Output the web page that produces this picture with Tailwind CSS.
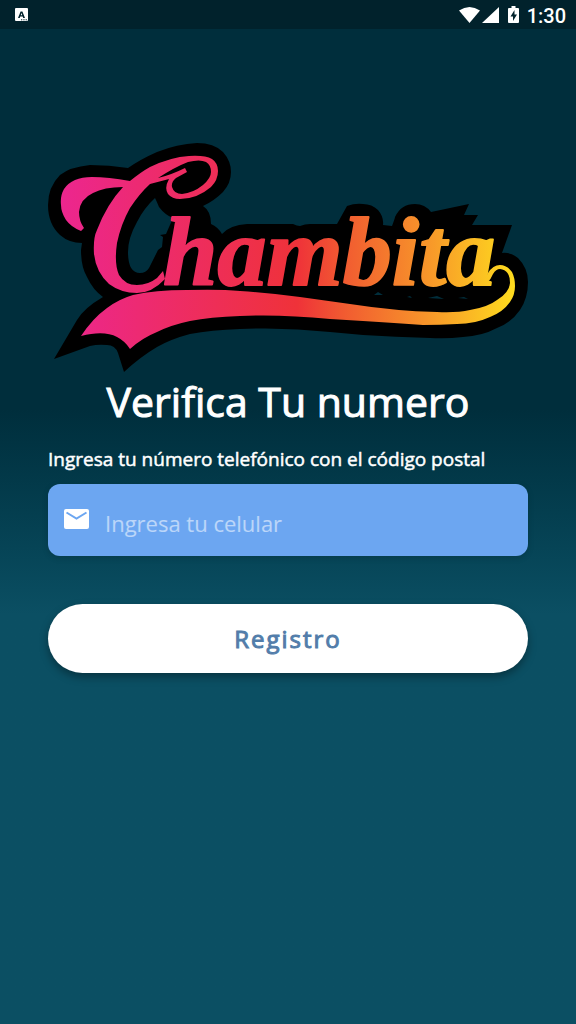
<!DOCTYPE html>
<html lang="es">
<head>
<meta charset="utf-8">
<meta name="viewport" content="width=device-width, initial-scale=1">
<title>Chambita</title>
<script src="https://cdn.jsdelivr.net/npm/@tailwindcss/browser@4"></script>
</head>
<body class="min-h-screen flex flex-col bg-linear-to-b from-[#002e3c] from-40% to-[#0b4f63] to-60% font-['Open_Sans',sans-serif] text-white">
<header class="h-[29px] shrink-0 flex items-center justify-between bg-[#01222c] pl-[15px] pr-[10px]">
  <svg class="size-[13px]" viewBox="0 0 13 13" aria-hidden="true">
    <rect width="13" height="13" rx="1" fill="#fff"/>
    <path d="M3 10 5.600 3.500h1.800L10 10H8.200l-.5-1.400H5.200L4.700 10zM5.700 7.300h1.600L6.500 5z" fill="#01222c"/>
    <path d="M6 11.800h1.300m1 0h1.300m1 0h1.300" stroke="#01222c" stroke-width="1"/>
  </svg>
  <div class="flex items-center">
    <svg class="w-[21px] h-4" viewBox="0 0 21 16" fill="#fff" aria-hidden="true"><path d="M0 3.500Q10.500-3.500 21 3.500L10.500 16z"/></svg>
    <svg class="w-[17px] h-4 ml-[2px]" viewBox="0 0 17 16" fill="#fff" aria-hidden="true"><path d="M17 0v16H0z"/></svg>
    <svg class="w-[11px] h-[17px] ml-[9px]" viewBox="0 0 11 17" aria-hidden="true"><path d="M3.500 0h4v2H10q1 0 1 1v13q0 1-1 1H1q-1 0-1-1V3q0-1 1-1h2.500z" fill="#fff"/><path d="M6.500 4 2.500 10.500H5V15l4-6.500H6.500z" fill="#01222c"/></svg>
    <time class="ml-2 font-[Roboto] text-[20px] leading-7 font-medium pt-[2px]">1:30</time>
  </div>
</header>
<main class="px-12 pt-[113px]">
  <svg class="block w-full" viewBox="48 142 480 230" role="img" aria-label="Chambita">
    <defs>
      <linearGradient id="ink" gradientUnits="userSpaceOnUse" x1="60" y1="0" x2="516" y2="0">
        <stop offset="0" stop-color="#ec268f"/>
        <stop offset=".52" stop-color="#ef3239"/>
        <stop offset=".62" stop-color="#f15a31"/>
        <stop offset=".8" stop-color="#f7942a"/>
        <stop offset="1" stop-color="#fedd1e"/>
      </linearGradient>
    </defs>
    <!-- badge backing -->
    <path fill-rule="evenodd" d="M82 243Q69 243 60 235Q48 224 48 205Q48 187 60 175Q70 167 90 165Q109 165 128 168Q141 159 157 152Q177 144 197 143Q214 143 223 152Q231 161 231 172Q231 183 223 192Q214 201 203 206Q211 211 211 224Q218 227 222 234Q230 225 247 224H293Q297 226 300 226Q305 224 310 224H337L347 206Q355 203 363 204Q372 204 378 210Q384 217 383 225L392 226Q395 218 395 217Q401 204 415 204Q425 204 431 212L469 204 464 215H478L472 225H512L502 253Q511 252 518 258Q528 268 528 282Q528 298 520 310Q511 323 497 328Q482 336 463 337Q447 339 430 338Q395 337 363 335L330 332Q285 327 240 329Q211 330 190 334Q171 339 157 347Q140 357 124 372L118 353Q115 345 107 345Q98 344 90 346L54 359 77 320Q84 308 103 297Q93 290 87 277Q81 267 81 250ZM155 198Q144 208 137 222Q128 238 128 252Q128 273 140 273Q146 273 149 268L158 250 162 247 163 237 160 235 166 234 173 218Q165 215 159 207Q157 202 155 198ZM374 295 378 292 383 295ZM407 297 410 296 412 298ZM428 298 437 296 444 299ZM458 298 464 297 468 299Z"/>
    <!-- initial with flourish -->
    <path fill="url(#ink)" fill-rule="evenodd" d="M84 228 81 231Q71 227 66 220Q61 212 61 205Q60 196 64 189Q72 177 92 177Q108 177 130 181Q141 172 150 167Q171 157 189 156Q205 155 212 159Q218 163 218 171Q218 180 211 187Q197 199 180 199Q172 199 168 194Q164 188 169 179L150 184Q140 193 130 208Q121 224 117 243Q114 264 119 275Q125 285 137 285Q148 285 157 278L163 271 165 279Q152 293 137 293Q121 293 109 284Q96 272 94 254Q93 238 97 230Q107 204 123 187Q104 187 93 193Q80 199 79 212Q79 221 84 228ZM158 178Q175 167 188 162Q200 159 206 162Q211 165 211 172Q211 178 203 185Q193 193 182 194Q174 194 172 187Q171 182 176 178L187 172 185 168Q171 175 158 178Z"/>
    <text x="163" y="285" fill="url(#ink)" stroke="url(#ink)" stroke-width="2" stroke-linejoin="round" font-family="Liberation Serif, serif" font-weight="700" font-style="italic" font-size="98">hambita</text>
    <!-- underline ribbon -->
    <path fill="url(#ink)" d="M81 336Q93 318 107 308Q119 299 133 295Q155 290 187 290Q220 289 240 291Q270 293 300 297L350 304Q395 311 437 312Q457 313 470 310Q488 307 497 300Q509 293 510 283Q510 270 500 269Q496 269 493 274Q489 284 480 286L478 282Q485 280 488 273Q493 265 500 265Q507 265 512 272Q515 278 515 286Q515 295 510 302Q503 312 490 317Q475 324 457 324Q440 325 423 325Q395 323 363 321L330 319Q280 314 240 316Q210 317 190 321Q171 325 157 332Q142 338 130 349Q125 341 117 337Q104 330 81 336Z"/>
  </svg>
  <h1 class="mt-1 text-center text-[41px] leading-[50px] [-webkit-text-stroke:1px_white]">Verifica Tu numero</h1>
  <form>
    <label for="phone" class="block mt-5 text-[19px] leading-[26px] [-webkit-text-stroke:0.5px_white]">Ingresa tu número telefónico con el código postal</label>
    <div class="relative mt-3 h-[72px] flex items-center rounded-xl bg-[#6ca6f1] shadow-[0_2px_6px_rgba(0,0,0,0.15)]">
      <svg class="absolute left-4 top-[25px] w-[25px] h-5" viewBox="0 0 25 20" aria-hidden="true"><rect width="25" height="20" rx="2" fill="#fff"/><path d="M2.500 3.500 12.500 9.500 22.500 3.500" fill="none" stroke="#6ca6f1" stroke-width="2"/></svg>
      <input id="phone" type="tel" placeholder="Ingresa tu celular" class="w-full h-full pl-[57px] pr-4 pt-1.5 rounded-xl bg-transparent text-[22px] text-white placeholder:text-white/54 outline-none">
    </div>
    <button type="submit" class="block w-full mt-12 h-[69px] rounded-full bg-white text-[24px] leading-8 tracking-[2px] text-[#527daa] shadow-[0_4px_8px_rgba(0,0,0,0.35)] [-webkit-text-stroke:1px_#527daa]">Registro</button>
  </form>
</main>
</body>
</html>
